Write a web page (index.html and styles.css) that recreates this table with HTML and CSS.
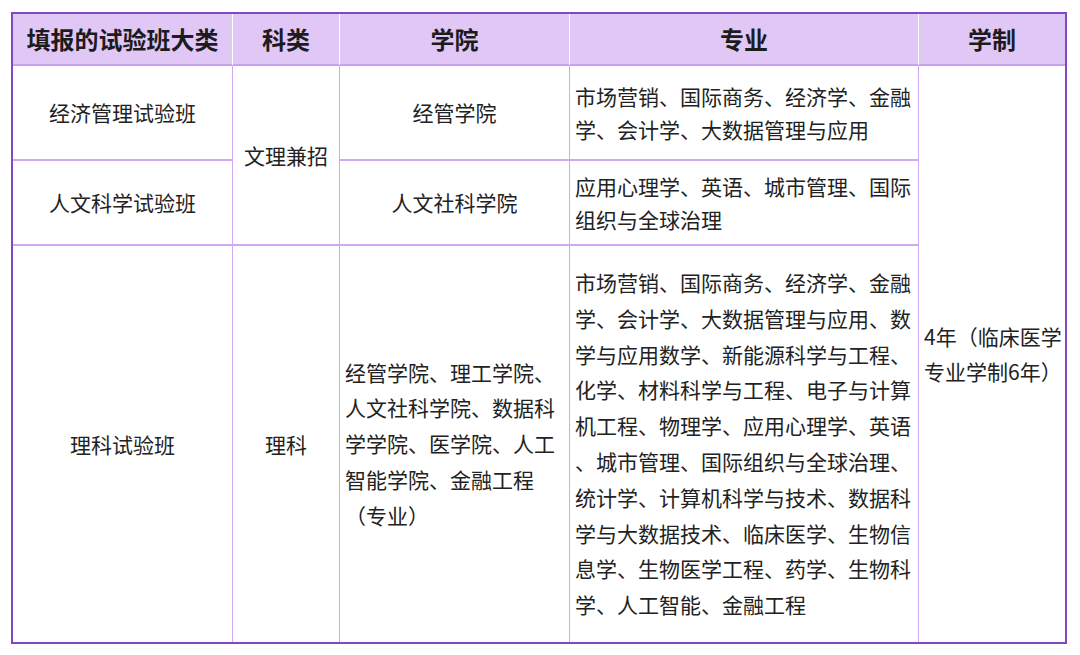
FILE: index.html
```html
<!DOCTYPE html>
<html lang="zh-CN">
<head>
<meta charset="utf-8">
<title>试验班</title>
<link rel="stylesheet" href="styles.css">
</head>
<body>
<table class="plan">
  <colgroup>
    <col class="c1"><col class="c2"><col class="c3"><col class="c4"><col class="c5">
  </colgroup>
  <thead>
    <tr class="head">
      <th>填报的试验班大类</th>
      <th>科类</th>
      <th>学院</th>
      <th>专业</th>
      <th class="last">学制</th>
    </tr>
  </thead>
  <tbody>
    <tr class="r1">
      <td class="center">经济管理试验班</td>
      <td class="center" rowspan="2">文理兼招</td>
      <td class="center">经管学院</td>
      <td class="left">市场营销、国际商务、经济学、金融<br>学、会计学、大数据管理与应用</td>
      <td class="left last bottom years" rowspan="3">4年（临床医学<br>专业学制6年）</td>
    </tr>
    <tr class="r2">
      <td class="center">人文科学试验班</td>
      <td class="center">人文社科学院</td>
      <td class="left">应用心理学、英语、城市管理、国际<br>组织与全球治理</td>
    </tr>
    <tr class="r3">
      <td class="center bottom">理科试验班</td>
      <td class="center bottom">理科</td>
      <td class="left bottom tall">经管学院、理工学院、<br>人文社科学院、数据科<br>学学院、医学院、人工<br>智能学院、金融工程<br>（专业）</td>
      <td class="left bottom tall">市场营销、国际商务、经济学、金融<br>学、会计学、大数据管理与应用、数<br>学与应用数学、新能源科学与工程、<br>化学、材料科学与工程、电子与计算<br>机工程、物理学、应用心理学、英语<br>、城市管理、国际组织与全球治理、<br>统计学、计算机科学与技术、数据科<br>学与大数据技术、临床医学、生物信<br>息学、生物医学工程、药学、生物科<br>学、人工智能、金融工程</td>
    </tr>
  </tbody>
</table>
</body>
</html>
```
FILE: styles.css
```css
html, body {
  margin: 0;
  padding: 0;
  background: #ffffff;
}

body {
  padding: 12px 0 0 11px;
  font-family: "Noto Sans CJK SC", "Noto Sans", sans-serif;
  color: #222222;
}

.plan {
  width: 1056px;
  table-layout: fixed;
  border-collapse: separate;
  border-spacing: 0;
  border: 2px solid #7f49c1;
}

.c1 { width: 220px; }
.c2 { width: 107px; }
.c3 { width: 230px; }
.c4 { width: 349px; }
.c5 { width: 146px; }

.plan th,
.plan td {
  box-sizing: border-box;
  border-right: 1px solid #cfaaf3;
  border-bottom: 2px solid #cfaaf3;
  vertical-align: middle;
  font-size: 21px;
  padding: 0 5px;
}

.plan th.last,
.plan td.last {
  border-right: none;
}

.plan td.bottom {
  border-bottom: none;
}

.head th {
  height: 52px;
  background: #e0c7f6;
  border-right: 1px solid #ffffff;
  border-bottom: 2px solid #c9a2ef;
  font-size: 24px;
  font-weight: 700;
  color: #1c1c1c;
  text-align: center;
  line-height: 30px;
}

.head th.last {
  border-right: none;
}

.r1 td { height: 95px; }
.r2 td { height: 85px; }
.r3 td { height: 396px; }

.center {
  text-align: center;
  line-height: 33px;
}

.left {
  text-align: left;
  line-height: 33px;
  white-space: nowrap;
}

.tall {
  line-height: 35.8px;
}

.years {
  padding-left: 4px;
  line-height: 35px;
}
```
